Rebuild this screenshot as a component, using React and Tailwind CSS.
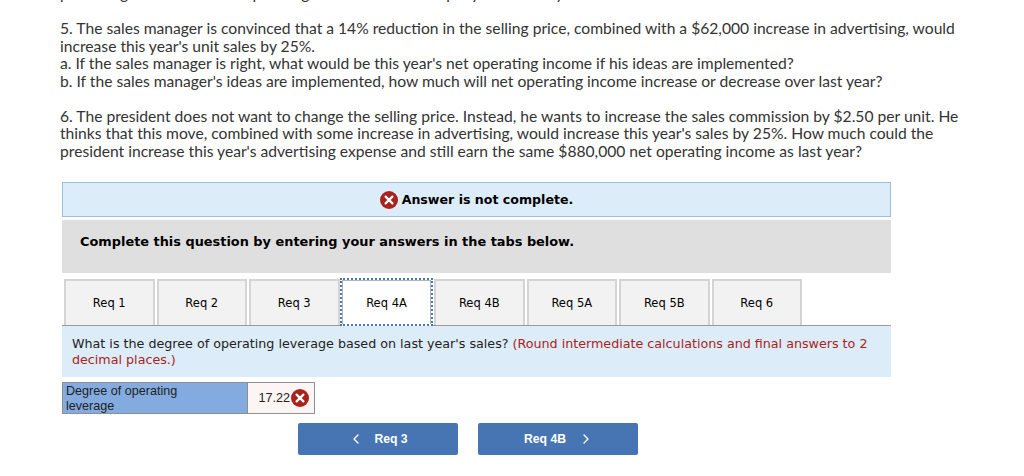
import { ChevronLeft, ChevronRight } from 'lucide-react';

const tabs = ['Req 1', 'Req 2', 'Req 3', 'Req 4A', 'Req 4B', 'Req 5A', 'Req 5B', 'Req 6'];

function ErrorIcon({ size = 18 }) {
    return (
        <svg width={size} height={size} viewBox="0 0 18 18" className="shrink-0">
            <circle cx="9" cy="9" r="9" fill="#a9231c" />
            <path d="M5.6 5.6l6.8 6.8M12.4 5.6l-6.8 6.8" stroke="#fff" strokeWidth="2.2" strokeLinecap="round" />
        </svg>
    );
}

export default function App() {
    return (
        <div className="w-[1024px] h-[476px] overflow-hidden bg-white">
            {/* Question text */}
            <div className="flow-root pl-[60px] pr-[40px] text-[15.65px] leading-[17.5px] text-[#333] font-['Lato',sans-serif] h-[182px] whitespace-nowrap">
                <div className="-mt-[15px] mb-[17.5px]">
                    percentage increase in net operating income for the company next fiscal year?
                </div>
                <p>
                    5. The sales manager is convinced that a 14% reduction in the selling price, combined with a $62,000 increase in advertising, would
                    <br />
                    increase this year's unit sales by 25%.
                    <br />
                    a. If the sales manager is right, what would be this year's net operating income if his ideas are implemented?
                    <br />
                    b. If the sales manager's ideas are implemented, how much will net operating income increase or decrease over last year?
                </p>
                <p className="mt-[17.5px]">
                    6. The president does not want to change the selling price. Instead, he wants to increase the sales commission by $2.50 per unit. He
                    <br />
                    thinks that this move, combined with some increase in advertising, would increase this year's sales by 25%. How much could the
                    <br />
                    president increase this year's advertising expense and still earn the same $880,000 net operating income as last year?
                </p>
            </div>

            {/* Answer box */}
            <div className="ml-[62px] w-[829px] font-['DejaVu_Sans',sans-serif]">
                <div className="h-[35px] pt-[1px] bg-[#ddecf9] border border-[#9dbfdc] flex items-center justify-center gap-1 text-[12.6px] font-bold text-black">
                    <ErrorIcon />
                    <span>Answer is not complete.</span>
                </div>

                <div className="mt-[3px] h-[53px] bg-[#dfdfdf] pl-[18px] pt-[13px] text-[12.9px] leading-[17px] font-bold text-black">
                    Complete this question by entering your answers in the tabs below.
                </div>

                {/* Tabs */}
                <div className="mt-[6px] h-[47px] pl-[2px] flex gap-[2px] border-b border-[#9a9a9a] items-stretch">
                    {tabs.map((tab) =>
                        tab === 'Req 4A' ? (
                            <div
                                key={tab}
                                className="w-[93px] shrink-0 -ml-[1.5px] -mr-[1px] -mt-[1px] -mb-[1px] bg-white border-2 border-dotted border-[#4a76b4] text-[11.5px] text-black"
                            >
                                <div className="h-full pt-[2px] border-x border-t border-[#b5b5b5] flex items-center justify-center">{tab}</div>
                            </div>
                        ) : (
                            <div
                                key={tab}
                                className="w-[90.5px] shrink-0 pt-[2px] bg-[#f2f2f2] border-2 border-b-0 border-[#d4d4d4] flex items-center justify-center text-[11.5px] text-black"
                            >
                                {tab}
                            </div>
                        ),
                    )}
                </div>

                <div className="h-[51px] bg-[#ddecf9] pl-[10px] pr-[16px] pt-[10px] text-[12.7px] leading-[16px] text-[#222]">
                    What is the degree of operating leverage based on last year's sales?{' '}
                    <span className="text-[#a9231c]">(Round intermediate calculations and final answers to 2 decimal places.)</span>
                </div>

                {/* Answer table */}
                <div className="mt-[5px] flex w-[253px] h-[32px] border border-[#8f8f8f] font-['Liberation_Sans',sans-serif] text-[12.6px] leading-[15px] text-[#222]">
                    <div className="w-[185px] pt-[1px] bg-[#83abdf] border-r border-[#8f8f8f] px-[3px]">
                        Degree of operating
                        <br />
                        leverage
                    </div>
                    <div className="flex-1 bg-[#fdf4f4] flex items-center justify-end pr-[5px] gap-[1px]">
                        17.22
                        <ErrorIcon />
                    </div>
                </div>

                {/* Prev / next */}
                <div className="mt-[9px] ml-[236px] flex gap-[20px] font-['Liberation_Sans',sans-serif] text-[12.2px] font-bold text-white">
                    <button className="w-[160px] h-[32px] bg-[#4775b4] rounded-[2px] flex items-center justify-center gap-[10px]">
                        <ChevronLeft size={16} strokeWidth={2} />
                        <span>Req 3</span>
                    </button>
                    <button className="w-[160px] h-[32px] pl-[2px] bg-[#4775b4] rounded-[2px] flex items-center justify-center gap-[12px]">
                        <span>Req 4B</span>
                        <ChevronRight size={16} strokeWidth={2} />
                    </button>
                </div>
            </div>
        </div>
    );
}
